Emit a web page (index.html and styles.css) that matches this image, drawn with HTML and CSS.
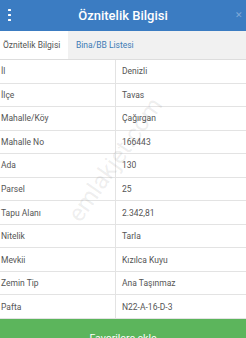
FILE: index.html
```html
<!DOCTYPE html>
<html lang="tr">
<head>
<meta charset="utf-8">
<link rel="stylesheet" href="styles.css">
</head>
<body>
<div class="page">
  <header class="topbar">
    <span class="menu"><i></i><i></i><i></i></span>
    <h1 class="title">Öznitelik Bilgisi</h1>
    <span class="close">✕</span>
  </header>
  <nav class="tabs">
    <span class="tab active">Öznitelik Bilgisi</span>
    <span class="tab">Bina/BB Listesi</span>
  </nav>
  <div class="table">
    <div class="row"><span class="key">İl</span><span class="val">Denizli</span></div>
    <div class="row"><span class="key">İlçe</span><span class="val">Tavas</span></div>
    <div class="row"><span class="key">Mahalle/Köy</span><span class="val">Çağırgan</span></div>
    <div class="row"><span class="key">Mahalle No</span><span class="val">166443</span></div>
    <div class="row"><span class="key">Ada</span><span class="val">130</span></div>
    <div class="row"><span class="key">Parsel</span><span class="val">25</span></div>
    <div class="row"><span class="key">Tapu Alanı</span><span class="val">2.342,81</span></div>
    <div class="row"><span class="key">Nitelik</span><span class="val">Tarla</span></div>
    <div class="row"><span class="key">Mevkii</span><span class="val">Kızılca Kuyu</span></div>
    <div class="row"><span class="key">Zemin Tip</span><span class="val">Ana Taşınmaz</span></div>
    <div class="row"><span class="key">Pafta</span><span class="val">N22-A-16-D-3</span></div>
  </div>
  <button class="fav">Favorilere ekle</button>
  <span class="watermark">emlakjet.com</span>
</div>
</body>
</html>
```
FILE: styles.css
```css
html, body {
  margin: 0;
  padding: 0;
  background: #ffffff;
}
.page {
  position: relative;
  width: 246px;
  height: 338px;
  overflow: hidden;
  font-family: Roboto, "Liberation Sans", sans-serif;
  display: flex;
  flex-direction: column;
}
.topbar {
  height: 31px;
  flex: none;
  background: #3b7cc2;
  display: flex;
  align-items: center;
  position: relative;
}
.menu {
  width: 19px;
  display: flex;
  flex-direction: column;
  align-items: center;
  gap: 2.5px;
  margin-top: -1px;
}
.menu i {
  display: block;
  width: 2.5px;
  height: 2.5px;
  background: #ffffff;
  border-radius: 0.5px;
}
.title {
  flex: 1;
  margin: 0 -14px 0 -19px;
  text-align: center;
  color: #ffffff;
  font-size: 13px;
  font-weight: 500;
}
.close {
  width: 14px;
  color: #7fa9d8;
  font-size: 9px;
  text-align: center;
  margin-top: -2px;
}
.tabs {
  height: 28px;
  flex: none;
  background: #f1f1f1;
  border-bottom: 1px solid #dddddd;
  display: flex;
  font-size: 8.5px;
}
.tab {
  display: flex;
  align-items: center;
  padding: 0 6px 0 8px;
  color: #3d7bb5;
}
.tab.active {
  background: #ffffff;
  color: #555555;
  padding: 0 6px 0 3px;
  width: 59px;
}
.table {
  flex: none;
  display: flex;
  flex-direction: column;
}
.row {
  height: 22.55px;
  border-bottom: 1px solid #e3e3e3;
  display: grid;
  grid-template-columns: 116px 1fr;
  font-size: 8.5px;
  color: #555555;
}
.key {
  display: flex;
  align-items: center;
  padding-left: 1px;
  border-right: 1px solid #e3e3e3;
}
.val {
  display: flex;
  align-items: center;
  padding-left: 6px;
}
.fav {
  flex: none;
  height: 34px;
  border: none;
  margin: 0;
  background: #5cb55c;
  color: #ffffff;
  font-family: Roboto, "Liberation Sans", sans-serif;
  font-size: 10.5px;
  padding: 4px 0 0;
  width: 100%;
}
.watermark {
  position: absolute;
  left: 43px;
  top: 146px;
  width: 144px;
  text-align: center;
  font-size: 24px;
  line-height: 28px;
  color: rgba(90, 90, 90, 0.1);
  transform: rotate(-55deg);
  transform-origin: center;
  pointer-events: none;
}
```
